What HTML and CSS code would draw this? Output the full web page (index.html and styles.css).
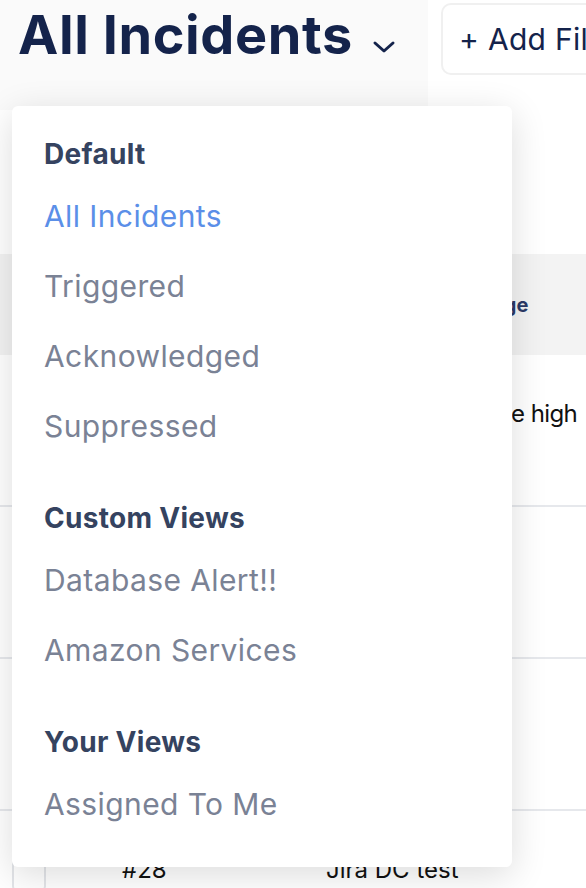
FILE: index.html
```html
<!DOCTYPE html>
<html lang="en">
<head>
<meta charset="utf-8">
<title>All Incidents</title>
<link rel="stylesheet" href="styles.css">
</head>
<body>
<div class="page">
  <header class="header">
    <div class="title-btn">
      <h1 class="title">All Incidents</h1>
      <svg class="chevron" width="24" height="14" viewBox="0 0 24 14"><path d="M3 3 L12 11 L21 3" fill="none" stroke="#14234b" stroke-width="3" stroke-linecap="round" stroke-linejoin="round"/></svg>
    </div>
    <button class="add-filter">+ Add Filter</button>
  </header>

  <div class="table">
    <div class="thead">
      <div class="cell c-check"></div>
      <div class="cell c-id">ID</div>
      <div class="cell c-msg">Incident Message</div>
    </div>
    <div class="row">
      <div class="cell c-check"></div>
      <div class="cell c-id">#31</div>
      <div class="cell c-msg tight">Server CPU usage high</div>
    </div>
    <div class="row">
      <div class="cell c-check"></div>
      <div class="cell c-id">#30</div>
      <div class="cell c-msg">Disk full</div>
    </div>
    <div class="row">
      <div class="cell c-check"></div>
      <div class="cell c-id">#29</div>
      <div class="cell c-msg">Latency</div>
    </div>
    <div class="row">
      <div class="cell c-check"><span class="checkbox"></span></div>
      <div class="cell c-id">#28</div>
      <div class="cell c-msg">Jira DC test</div>
    </div>
  </div>

  <div class="menu">
    <div class="section">
      <div class="heading">Default</div>
      <div class="item active">All Incidents</div>
      <div class="item">Triggered</div>
      <div class="item">Acknowledged</div>
      <div class="item">Suppressed</div>
    </div>
    <div class="section">
      <div class="heading">Custom Views</div>
      <div class="item">Database Alert!!</div>
      <div class="item">Amazon Services</div>
    </div>
    <div class="section">
      <div class="heading">Your Views</div>
      <div class="item">Assigned To Me</div>
    </div>
  </div>
</div>
</body>
</html>
```

FILE: styles.css
```css
* { box-sizing: border-box; }
html, body {
  margin: 0;
  padding: 0;
  background: #ffffff;
  font-family: Inter, "Noto Sans", sans-serif;
  overflow: hidden;
}
.page {
  position: relative;
  width: 586px;
  height: 888px;
  overflow: hidden;
}
.header {
  display: flex;
  align-items: flex-start;
  height: 254px;
}
.title-btn {
  flex: none;
  width: 428px;
  height: 110px;
  background: #fafafa;
  display: flex;
  align-items: flex-start;
  padding-left: 18px;
}
.title {
  margin: 0;
  margin-top: 3px;
  font-size: 54px;
  line-height: 64px;
  font-weight: 700;
  color: #14234b;
  letter-spacing: 0.6px;
  white-space: nowrap;
}
.chevron {
  flex: none;
  margin-left: 19px;
  margin-top: 40px;
}
.add-filter {
  flex: none;
  margin-left: 13px;
  margin-top: 3px;
  height: 72px;
  width: 220px;
  background: #fff;
  border: 2px solid #f0f0f0;
  border-radius: 10px;
  font-family: Inter, "Noto Sans", sans-serif;
  font-size: 30px;
  letter-spacing: 0.3px;
  color: #14234b;
  text-align: left;
  padding: 0 0 0 16px;
  white-space: nowrap;
}
.table { width: 586px; }
.thead {
  display: flex;
  height: 101px;
  background: #f3f3f3;
  align-items: center;
  font-size: 20px;
  font-weight: 700;
  color: #2b3a67;
}
.row {
  display: flex;
  height: 152px;
  border-bottom: 2px solid #e6e8ec;
  align-items: flex-start;
  padding-top: 44px;
  font-size: 24px;
  color: #111;
}
.cell { white-space: nowrap; }
.c-check { width: 122px; padding-left: 12px; }
.c-id { width: 204px; }
.c-msg { flex: 1; }
.c-msg.tight { letter-spacing: -0.6px; }
.thead .c-msg { padding-left: 29px; }
.checkbox {
  display: block;
  width: 34px;
  height: 34px;
  margin-top: 2px;
  border: 2px solid #e3e5e9;
  border-radius: 5px;
  background: #fff;
}
.menu {
  position: absolute;
  left: 12px;
  top: 106px;
  width: 500px;
  height: 761px;
  background: #fff;
  border-radius: 6px;
  box-shadow: 0 8px 36px rgba(0, 0, 0, 0.14);
  padding: 28px 0 0 32px;
}
.section + .section { margin-top: 37px; }
.heading {
  font-size: 28px;
  line-height: 40px;
  font-weight: 700;
  letter-spacing: 0.3px;
  color: #354360;
  margin-bottom: 7px;
}
.item {
  font-size: 30px;
  line-height: 70px;
  letter-spacing: 0.4px;
  color: #7a8295;
}
.item.active { color: #5b8fe8; }
```
